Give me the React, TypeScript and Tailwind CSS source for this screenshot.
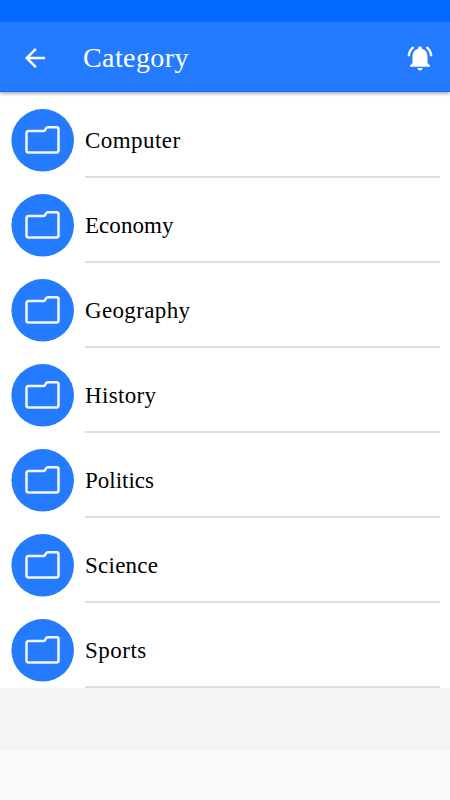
const categories = [
  { name: "Computer", spacing: "tracking-[0.45px]" },
  { name: "Economy", spacing: "tracking-[0.05px]" },
  { name: "Geography", spacing: "tracking-[0.35px]" },
  { name: "History", spacing: "tracking-[0.35px]" },
  { name: "Politics", spacing: "tracking-[0px]" },
  { name: "Science", spacing: "tracking-[0.25px]" },
  { name: "Sports", spacing: "tracking-[0.5px]" },
];

function BackArrow() {
  return (
    <svg className="size-[30px]" viewBox="0 0 24 24" fill="white" aria-label="Back">
      <path d="M20 11H7.83l5.59-5.59L12 4l-8 8 8 8 1.41-1.41L7.83 13H20v-2z" />
    </svg>
  );
}

function Bell() {
  return (
    <svg className="size-[30px]" viewBox="0 0 24 24" fill="white" aria-label="Notifications">
      <path d="M7.58 4.08L6.15 2.65C3.75 4.48 2.17 7.3 2.03 10.5h2a8.445 8.445 0 0 1 3.55-6.42zm12.39 6.42h2c-.15-3.2-1.73-6.02-4.12-7.85l-1.42 1.42a8.495 8.495 0 0 1 3.54 6.43zM18 11c0-3.07-1.64-5.64-4.5-6.32V4c0-.83-.67-1.5-1.5-1.5s-1.5.67-1.5 1.5v.68C7.63 5.36 6 7.92 6 11v5l-2 2v1h16v-1l-2-2v-5zm-6 11c.14 0 .27-.01.4-.04.65-.14 1.18-.58 1.44-1.18.1-.24.15-.5.15-.78h-4c.01 1.1.9 2 2.01 2z" />
    </svg>
  );
}

function FolderBadge() {
  return (
    <svg className="h-[63px] w-[63px] shrink-0" viewBox="0 0 63 63" fill="none">
      <circle cx="31.7" cy="31.3" r="31.3" fill="#247bff" />
      <path
        d="M17.4 22H32.3Q33.5 22 34 21.1L35 19.3Q35.6 18.3 36.8 18.3H45.6A1.9 1.9 0 0 1 47.5 20.2V41.6A1.9 1.9 0 0 1 45.6 43.5H17.4A1.9 1.9 0 0 1 15.5 41.6V23.9A1.9 1.9 0 0 1 17.4 22Z"
        stroke="#f4f7ff"
        strokeWidth="2.5"
        strokeLinejoin="round"
      />
    </svg>
  );
}

export default function App() {
  return (
    <div className="flex h-[800px] w-[450px] flex-col overflow-hidden bg-[#fafafa] font-['Liberation_Serif',serif]">
      <div className="h-[22px] shrink-0 bg-[#0469ff]" />
      <header className="z-10 flex h-[70px] shrink-0 items-center border-b border-[#0c6cff] bg-[#247bff] pt-[2px] pr-[15px] pl-5 shadow-[0_2px_3px_rgba(0,0,0,0.3)]">
        <BackArrow />
        <h1 className="ml-[33px] flex-1 text-[28px] leading-[34px] tracking-[0.4px] text-white">Category</h1>
        <Bell />
      </header>
      <main className="h-[658px] shrink-0 bg-[#f4f4f4]">
        <ul className="bg-white pt-px">
          {categories.map((category) => (
            <li key={category.name} className="flex h-[85px] pr-2.5 pl-[11px]">
              <div className="pt-[15.5px]">
                <FolderBadge />
              </div>
              <div className="ml-[11px] flex flex-1 items-center border-b-2 border-[#dedede] pt-[13px]">
                <span className={`text-[23px] leading-[28px] text-black ${category.spacing}`}>{category.name}</span>
              </div>
            </li>
          ))}
        </ul>
      </main>
    </div>
  );
}
